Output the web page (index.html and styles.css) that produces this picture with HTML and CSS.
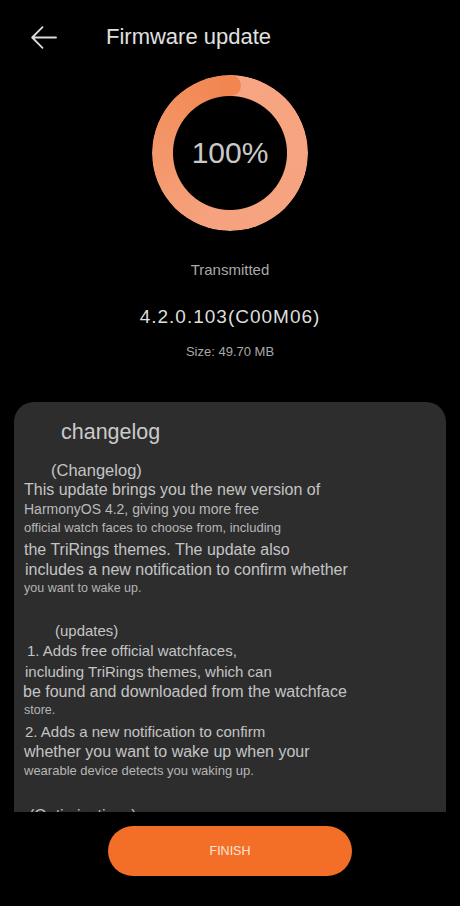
FILE: index.html
```html
<!DOCTYPE html>
<html lang="en">
<head>
<meta charset="utf-8">
<title>Firmware update</title>
<link rel="stylesheet" href="styles.css">
</head>
<body>
<div class="page">
  <div class="header">
    <svg class="back" width="26" height="23" viewBox="0 0 26 23" aria-hidden="true">
      <path d="M25 11.5H1.5M11.5 1.2L1.2 11.5L11.5 21.8" fill="none" stroke="#dcdcdc" stroke-width="1.8" stroke-linecap="round" stroke-linejoin="round"/>
    </svg>
    <div class="title">Firmware update</div>
  </div>

  <div class="ring">
    <div class="ring-track"></div>
    <div class="ring-cap"></div>
    <div class="ring-label">100%</div>
  </div>

  <div class="status">Transmitted</div>
  <div class="version">4.2.0.103(C00M06)</div>
  <div class="size">Size: 49.70 MB</div>

  <div class="card">
    <div class="ln t-head">changelog</div>
    <div class="ln t-sub">(Changelog)</div>
    <div class="ln f16">This update brings you the new version of</div>
    <div class="ln f14">HarmonyOS 4.2, giving you more free</div>
    <div class="ln f13 mt1">official watch faces to choose from, including</div>
    <div class="ln f16 mt4">the TriRings themes. The update also</div>
    <div class="ln f16 ml1">includes a new notification to confirm whether</div>
    <div class="ln f12">you want to wake up.</div>

    <div class="ln f15 mt24 ind-upd">(updates)</div>
    <div class="ln f15 mt1 ml3">1. Adds free official watchfaces,</div>
    <div class="ln f15 mt2 ml1">including TriRings themes, which can</div>
    <div class="ln f16 mt1 mln1">be found and downloaded from the watchface</div>
    <div class="ln f12">store.</div>
    <div class="ln f15 mt4 ml1">2. Adds a new notification to confirm</div>
    <div class="ln f16 mt1">whether you want to wake up when your</div>
    <div class="ln f13">wearable device detects you waking up.</div>

    <div class="ln f16 mt26 ml5">(Optimizations)</div>
  </div>

  <div class="finish">FINISH</div>
</div>
</body>
</html>
```

FILE: styles.css
```css
html, body {
  margin: 0;
  padding: 0;
  background: #000;
}

body {
  width: 460px;
  height: 906px;
  overflow: hidden;
  font-family: "Liberation Sans", Arial, sans-serif;
}

.page {
  display: flex;
  flex-direction: column;
  align-items: center;
  height: 906px;
}

.header {
  align-self: stretch;
  height: 74px;
  display: flex;
  align-items: center;
  padding-left: 31px;
  gap: 49px;
}

.back {
  display: block;
}

.title {
  font-size: 22px;
  color: #e0e0e0;
  line-height: 26px;
}

.ring {
  position: relative;
  width: 156px;
  height: 156px;
  margin-top: 1px;
}

.ring-track {
  width: 156px;
  height: 156px;
  border-radius: 50%;
  background: conic-gradient(#f7a582 0deg, #f6a27e 200deg, #f39567 280deg, #f28650 360deg);
  -webkit-mask: radial-gradient(circle, transparent 56.5px, #000 57.5px);
  mask: radial-gradient(circle, transparent 56.5px, #000 57.5px);
}

.ring-cap {
  position: absolute;
  left: 67.5px;
  top: 0;
  width: 21px;
  height: 21px;
  border-radius: 50%;
  background: #f28650;
}

.ring-label {
  position: absolute;
  inset: 0;
  display: flex;
  align-items: center;
  justify-content: center;
  font-size: 30px;
  color: #c9c9c9;
}

.status {
  margin-top: 29px;
  font-size: 15px;
  line-height: 20px;
  color: #a9a9a9;
}

.version {
  margin-top: 25px;
  font-size: 19px;
  line-height: 24px;
  letter-spacing: 1px;
  color: #dedede;
}

.size {
  margin-top: 14px;
  font-size: 13px;
  line-height: 18px;
  color: #a8a8a8;
}

.card {
  margin-top: 41px;
  width: 422px;
  height: 410px;
  padding-left: 10px;
  background: #2d2d2d;
  border-radius: 20px 20px 0 0;
  overflow: hidden;
  flex-shrink: 0;
}

.ln {
  white-space: nowrap;
  color: #c4c4c4;
}

.t-head {
  font-size: 21.5px;
  line-height: 26px;
  margin-top: 16.5px;
  margin-left: 37px;
  color: #cacaca;
}

.t-sub {
  font-size: 16.5px;
  line-height: 20px;
  margin-top: 15px;
  margin-left: 27px;
}

.ind-upd { margin-left: 31px; }

.f16 { font-size: 16px; line-height: 20px; }
.f15 { font-size: 15px; line-height: 19px; }
.f14 { font-size: 14px; line-height: 18px; color: #bababa; }
.f13 { font-size: 13px; line-height: 17px; color: #b6b6b6; }
.f12 { font-size: 12.5px; line-height: 16px; color: #b4b4b4; }

.mt1 { margin-top: 1px; }
.mt2 { margin-top: 2px; }
.mt4 { margin-top: 4.5px; }
.mt26 { margin-top: 26.5px; }
.mt24 { margin-top: 24.5px; }

.ml1 { margin-left: 1px; }
.ml3 { margin-left: 3px; }
.ml5 { margin-left: 5px; }
.mln1 { margin-left: -1px; }

.finish {
  margin-top: 14px;
  width: 244px;
  height: 50px;
  border-radius: 25px;
  background: #f36f27;
  color: #fde6d8;
  font-size: 12.5px;
  display: flex;
  align-items: center;
  justify-content: center;
  flex-shrink: 0;
}
```
